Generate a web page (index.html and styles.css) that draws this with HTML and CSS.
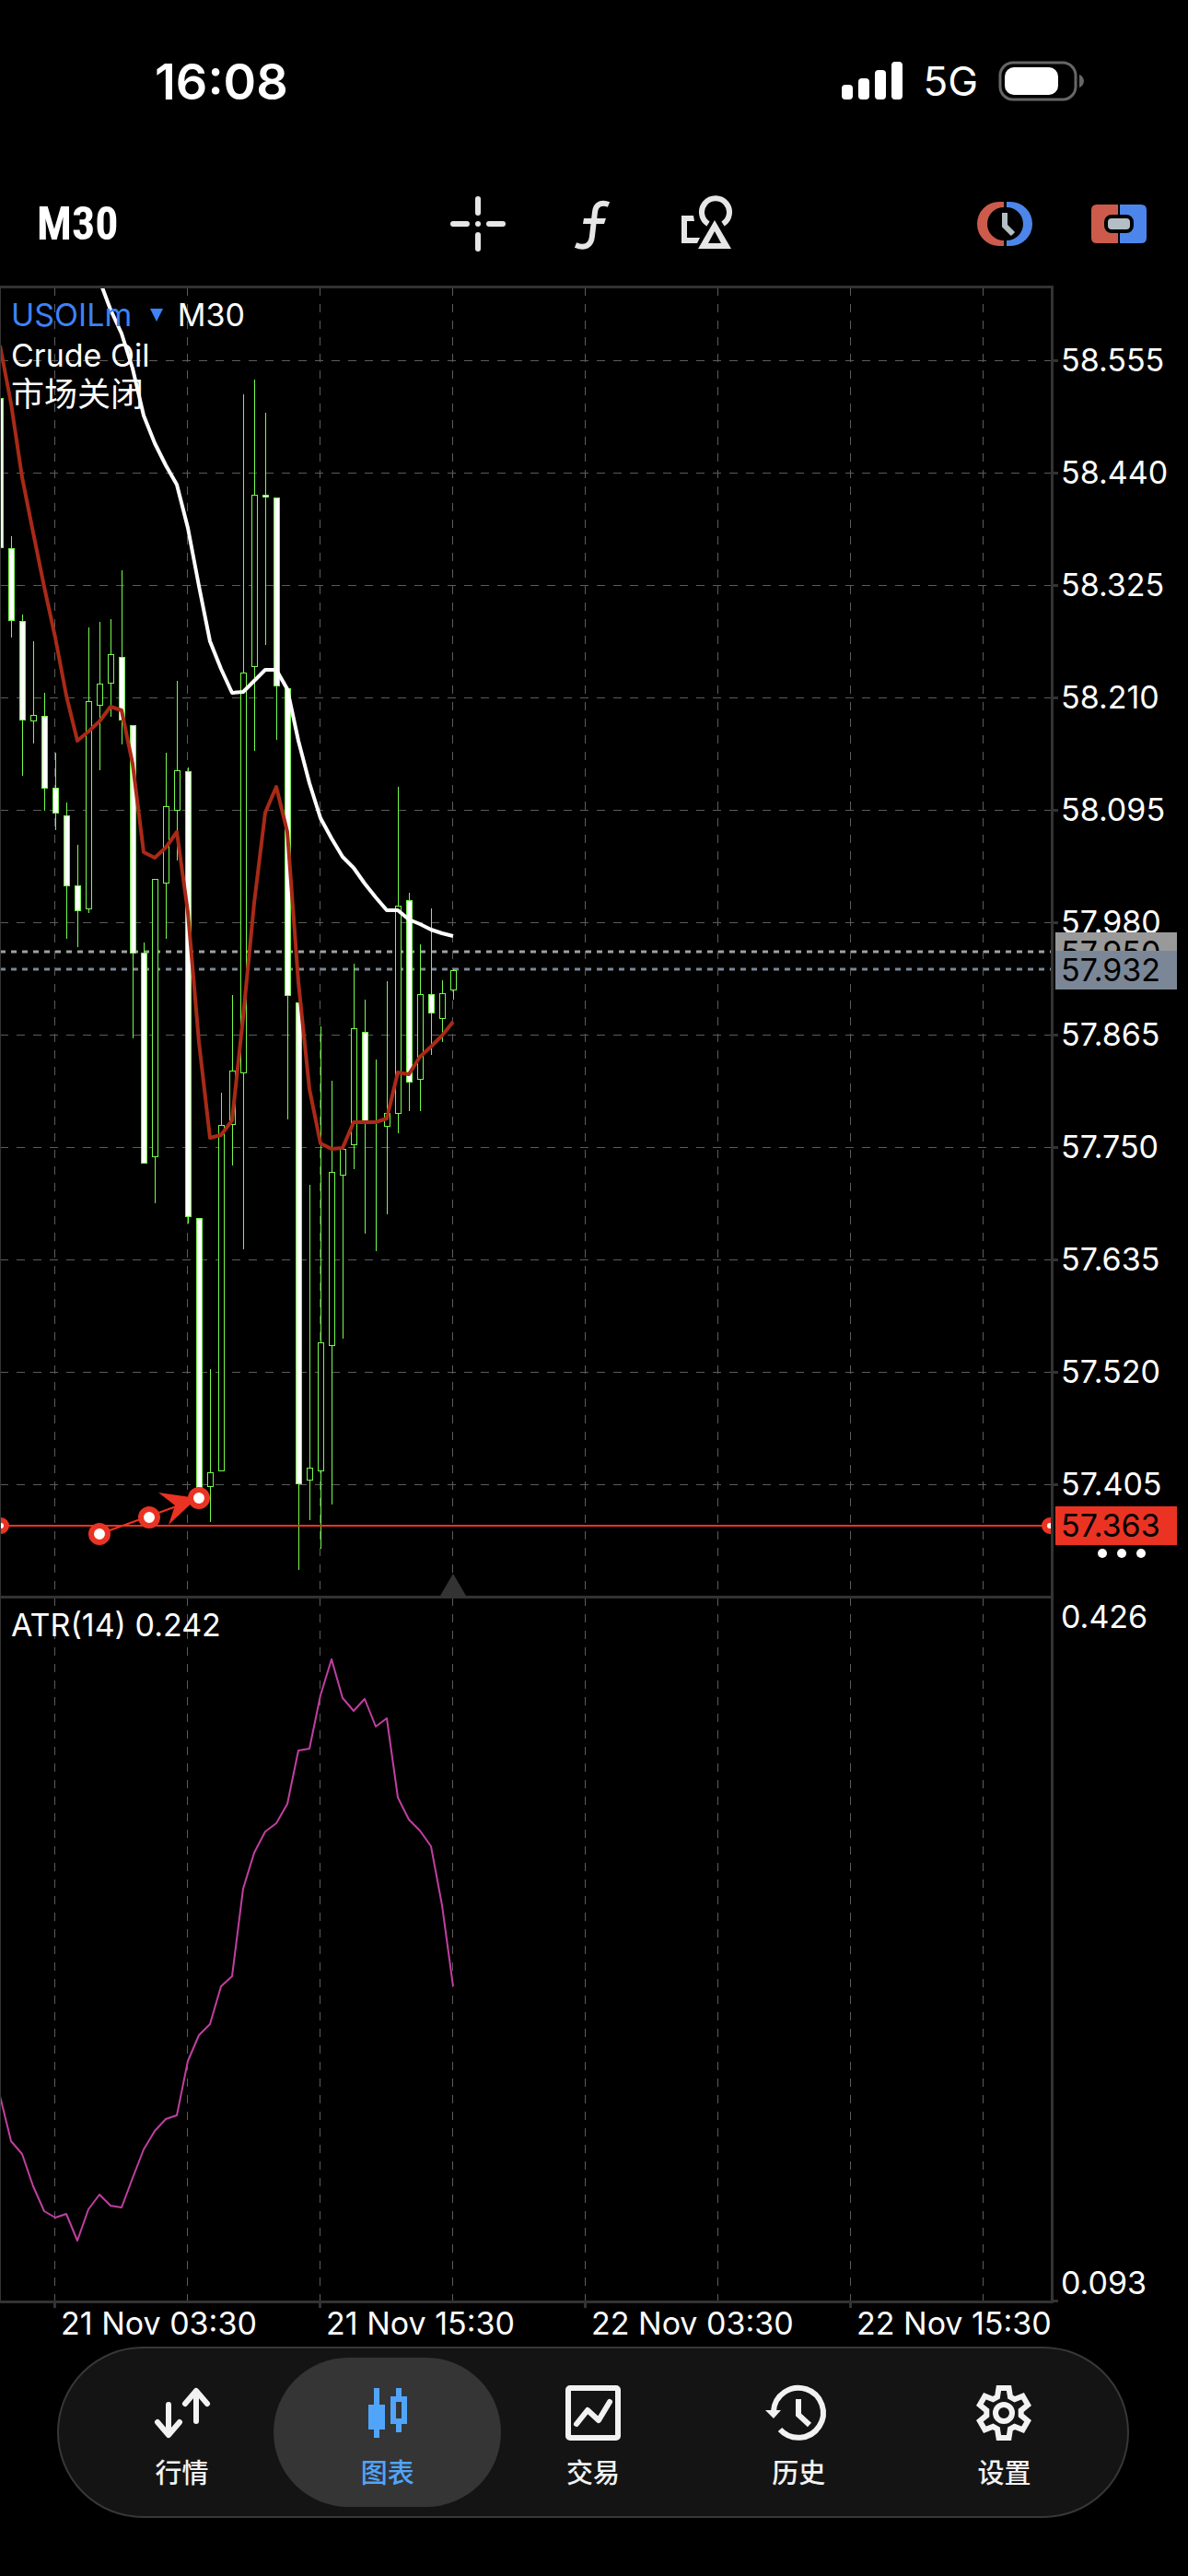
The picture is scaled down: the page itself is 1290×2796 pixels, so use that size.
FILE: index.html
```html
<!DOCTYPE html>
<html lang="zh-CN">
<head>
<meta charset="UTF-8">
<meta name="viewport" content="width=device-width, initial-scale=1.0">
<title>USOILm M30</title>
<link rel="stylesheet" href="styles.css">
</head>
<body>

<div class="status-bar">
    <span class="clock">16:08</span>
    <div class="status-icons">
        <svg class="signal" viewBox="0 0 66 42" width="66" height="42" fill="#fff">
            <rect x="0" y="25" width="12" height="16" rx="4"/>
            <rect x="18" y="18" width="12" height="23" rx="4"/>
            <rect x="36" y="9" width="12" height="32" rx="4"/>
            <rect x="54" y="0" width="12" height="41" rx="4"/>
        </svg>
        <span class="network">5G</span>
        <svg class="battery" viewBox="0 0 94 44" width="94" height="44">
            <rect x="2" y="2" width="82" height="40" rx="14" fill="none" stroke="#666" stroke-width="3"/>
            <rect x="7" y="7" width="58" height="30" rx="10" fill="#fff"/>
            <path d="M88 15c3 1 5 4 5 7s-2 6-5 7z" fill="#666"/>
        </svg>
    </div>
</div>

<div class="toolbar">
    <button class="timeframe" type="button">M30</button>
    <div class="tools">
        <button type="button" aria-label="Crosshair">
            <svg viewBox="0 0 60 60" width="60" height="60" stroke="#e6e6e6" stroke-width="6" stroke-linecap="round">
                <path d="M30 3v15M30 42v15M3 30h15M42 30h15M30 30h0"/>
            </svg>
        </button>
        <button type="button" aria-label="Indicators">
            <svg viewBox="0 0 60 60" width="60" height="60" fill="none" stroke="#e6e6e6" stroke-width="6">
                <path d="M48 9C41 6 34 8 33 17L30 43C29 54 22 57 12 53"/>
                <path d="M20 30L21 24H45L43 30z" fill="#e6e6e6" stroke="none"/>
            </svg>
        </button>
        <button type="button" aria-label="Objects">
            <svg viewBox="0 0 60 60" width="60" height="60" fill="none" stroke="#e6e6e6" stroke-width="6">
                <path d="M32 30A15 15 0 1 1 48 30"/>
                <path d="M16 21L17 27H9V45H23L20 51H3V21z" fill="#e6e6e6" stroke="none"/>
                <path fill-rule="evenodd" d="M39 26L57 57H21zM39 38L32 51H46z" fill="#e6e6e6" stroke="none"/>
            </svg>
        </button>
    </div>
    <div class="trade-tools">
        <button type="button" aria-label="Pending order">
            <svg viewBox="0 0 60 60" width="60" height="60">
                <path d="M29 6H24A24 24 0 0 0 24 54H29V48A18 18 0 0 1 29 12z" fill="#cc5b4b"/>
                <path d="M32 6H36A24 24 0 0 1 36 54H32V48A18 18 0 0 0 32 12z" fill="#4d86ea"/>
                <path d="M30 18V32L39 41" fill="none" stroke="#b3bec5" stroke-width="6"/>
            </svg>
        </button>
        <button type="button" aria-label="One click trading">
            <svg viewBox="0 0 60 60" width="60" height="60">
                <path d="M6 9H29V51H6Q0 51 0 45V15Q0 9 6 9z" fill="#cc5b4b"/>
                <path d="M31 9H54Q60 9 60 15V45Q60 51 54 51H31z" fill="#4d86ea"/>
                <rect x="16" y="22" width="28" height="16" rx="6" fill="#b3bec5" stroke="#000" stroke-width="4"/>
            </svg>
        </button>
    </div>
</div>

<div class="chart">
    <svg class="plot" viewBox="0 310 1290 2225">
        <defs>
            <clipPath id="plotArea"><rect x="1" y="313" width="1140" height="2184"/></clipPath>
        </defs>

        <g id="grid" class="grid"></g>

        <g class="frame">
            <rect x="0" y="310" width="1144" height="3"/>
            <rect x="0" y="310" width="1" height="2190"/>
            <rect x="0" y="1732" width="1144" height="3"/>
            <rect x="0" y="2497" width="1144" height="3"/>
            <rect x="1141" y="310" width="3" height="2190"/>
            <rect x="1144" y="2496" width="5" height="3"/>
        </g>
        <path class="shift-mark" d="M492 1708L506 1732H478z"/>

        <g clip-path="url(#plotArea)">
            <line class="ask-line" x1="0" y1="1033" x2="1141" y2="1033"/>
            <line class="bid-line" x1="0" y1="1052" x2="1141" y2="1052"/>
            <g id="candles" class="candles"></g>
            <polyline id="maFast" class="ma-fast"/>
            <polyline id="maSlow" class="ma-slow"/>
            <polyline id="atr" class="atr-line"/>

            <g class="drawing">
                <line x1="0" y1="1656" x2="1141" y2="1656"/>
                <line x1="108" y1="1665" x2="200" y2="1632"/>
                <path d="M172 1620L214 1626L183 1655L190 1634z"/>
                <circle cx="1" cy="1656" r="6"/>
                <circle cx="1140" cy="1656" r="6"/>
                <circle cx="108" cy="1665" r="9"/>
                <circle cx="162" cy="1647" r="9"/>
                <circle cx="216" cy="1626" r="9"/>
            </g>
        </g>

        <g id="prices" class="labels"></g>
        <g class="labels">
            <rect x="1146" y="1012" width="132" height="42" fill="#999"/>
            <text class="tag-text" x="1152" y="1046">57.950</text>
            <rect x="1146" y="1032" width="132" height="42" fill="#7b8796"/>
            <text class="tag-text" x="1152" y="1065">57.932</text>
            <rect x="1146" y="1635" width="132" height="42" fill="#eb3323"/>
            <text class="tag-text" x="1152" y="1668">57.363</text>
            <circle cx="1197" cy="1686" r="5"/>
            <circle cx="1218" cy="1686" r="5"/>
            <circle cx="1239" cy="1686" r="5"/>
            <text x="12" y="1776">ATR(14) 0.242</text>
            <text x="1152" y="1767">0.426</text>
            <text x="1152" y="2490">0.093</text>
            <text x="66" y="2534">21 Nov 03:30</text>
            <text x="354" y="2534">21 Nov 15:30</text>
            <text x="642" y="2534">22 Nov 03:30</text>
            <text x="930" y="2534">22 Nov 15:30</text>
        </g>
    </svg>

    <div class="legend">
        <div><button class="symbol" type="button">USOILm <svg viewBox="0 0 14 14" width="14" height="14"><path d="M0 0H14L7 14z" fill="#3d82f7"/></svg></button> <span>M30</span></div>
        <div>Crude Oil</div>
        <div class="market-state">市场关闭</div>
    </div>
</div>

<nav class="tab-bar">
    <a href="#quotes">
        <svg viewBox="0 0 60 60" width="60" height="60" fill="none" stroke="#f2f2f2" stroke-width="6" stroke-linecap="round" stroke-linejoin="round">
            <path d="M15 21V53M3 40L15 54L27 40M45 39V7M33 20L45 6L57 20"/>
        </svg>
        行情
    </a>
    <a href="#chart" class="active">
        <svg viewBox="0 0 60 60" width="60" height="60" fill="#50a5fa">
            <path d="M15 3h6v18h6v27h-6v9h-6v-9H9V21h6z"/>
            <path fill-rule="evenodd" d="M39 3h6v9h6v30h-6v9h-6v-9h-6V12h6zM39 18h6v18h-6z"/>
        </svg>
        图表
    </a>
    <a href="#trade">
        <svg viewBox="0 0 60 60" width="60" height="60" fill="none" stroke="#f2f2f2" stroke-width="6" stroke-linejoin="round" stroke-linecap="round">
            <rect x="3" y="3" width="54" height="54" rx="2"/>
            <path d="M12 42L24 27L36 38L48 18"/>
        </svg>
        交易
    </a>
    <a href="#history">
        <svg viewBox="0 0 60 60" width="60" height="60" fill="none" stroke="#f2f2f2" stroke-width="6">
            <path d="M3 28A27 27 0 1 1 10 48M30 15V32L42 43"/>
            <path d="M-6 27H11L3 36z" fill="#f2f2f2" stroke="none"/>
        </svg>
        历史
    </a>
    <a href="#settings">
        <svg viewBox="-30 -30 60 60" width="60" height="60" fill="none" stroke="#f2f2f2" stroke-width="6">
            <path d="M-5.5-27H5.5L7-17.5L11.7-14.8L20.6-18.3L26.1-8.7L18.7-2.7V2.7L26.1 8.7L20.6 18.3L11.7 14.8L7 17.5L5.5 27H-5.5L-7 17.5L-11.7 14.8L-20.6 18.3L-26.1 8.7L-18.7 2.7V-2.7L-26.1-8.7L-20.6-18.3L-11.7-14.8L-7-17.5z"/>
            <circle r="9"/>
        </svg>
        设置
    </a>
</nav>

<script src="script.js"></script>
</body>
</html>
```
FILE: styles.css
```css
* {
    box-sizing: border-box;
}
body {
    margin: 0;
    background-color: #000;
    color: #fff;
    font-family: Inter, "Noto Sans CJK SC", sans-serif;
}
button {
    padding: 0;
    border: none;
    background: none;
    color: inherit;
    font: inherit;
    cursor: pointer;
}
svg {
    display: block;
    overflow: visible;
}

/* status bar */
.status-bar {
    display: flex;
    justify-content: space-between;
    align-items: center;
    height: 176px;
    padding: 0 112px 0 168px;
}
.clock {
    font-size: 54px;
    font-weight: 600;
}
.status-icons {
    display: flex;
    align-items: center;
    gap: 22px;
}
.network {
    font-size: 44px;
    font-weight: 400;
}

/* toolbar */
.toolbar {
    display: grid;
    grid-template-columns: 1fr auto 1fr;
    align-items: center;
    height: 134px;
    padding: 0 45px 0 40px;
}
.timeframe {
    justify-self: start;
    font-family: "Roboto Condensed", "Liberation Sans", sans-serif;
    font-size: 50px;
    font-weight: 700;
}
.tools,
.trade-tools {
    display: flex;
    gap: 64px;
}
.trade-tools {
    justify-self: end;
}

/* chart */
.chart {
    position: relative;
}
.plot {
    width: 100%;
    height: auto;
}
.frame,
.shift-mark {
    fill: #333;
}
.frame,
.grid,
.candles {
    shape-rendering: crispEdges;
}
.grid line {
    stroke: #5c5c5c;
    stroke-dasharray: 9;
}
.grid rect {
    fill: #333;
}
.candles rect {
    fill: #000;
    stroke: #75fb4c;
}
.candles .down {
    fill: #fff;
}
.candles line {
    stroke: #75fb4c;
}
.ma-fast,
.ma-slow,
.atr-line {
    fill: none;
    stroke-linejoin: round;
    stroke-width: 4px;
}
.ma-fast {
    stroke: #a82a17;
}
.ma-slow {
    stroke: #fff;
}
.atr-line {
    stroke: #c03fa0;
    stroke-width: 2px;
}
.ask-line,
.bid-line {
    stroke: #a0a0a0;
    stroke-width: 3px;
    stroke-dasharray: 6;
}
.bid-line {
    stroke: #7b8796;
}
.drawing line {
    stroke: #eb3323;
    stroke-width: 2px;
}
.drawing path {
    fill: #eb3323;
}
.drawing circle {
    fill: #fff;
    stroke: #eb3323;
    stroke-width: 6px;
}
.labels {
    fill: #fff;
    font-size: 34px;
}
.tag-text {
    fill: #000;
}
.legend {
    position: absolute;
    top: 10px;
    left: 12px;
    font-size: 34px;
    line-height: 44px;
}
.market-state {
    font-size: 36px;
    line-height: 40px;
}
.symbol {
    display: inline-flex;
    align-items: center;
    gap: 20px;
    margin-right: 6px;
    color: #3d82f7;
}

/* bottom tabs */
.tab-bar {
    display: grid;
    grid-template-columns: repeat(5, 1fr);
    height: 186px;
    margin: 12px 64px 62px 62px;
    padding: 10px 22px;
    border: 2px solid #373737;
    border-radius: 94px;
    background-color: #141414;
}
.tab-bar a {
    display: flex;
    flex-direction: column;
    align-items: center;
    gap: 16px;
    margin: 0 -12px;
    padding-top: 30px;
    border-radius: 82px;
    color: #f2f2f2;
    font-size: 29px;
    font-weight: 500;
    line-height: 40px;
    text-decoration: none;
}
.tab-bar .active {
    background-color: #353535;
    color: #50a5fa;
}
```
FILE: script.js
```js
// one candle every 12px: [high, body top, body bottom, low, closed down]
var candles = [
    [432, 432, 594, 594, 1], [582, 595, 673, 692, 1], [667, 674, 781, 842, 1],
    [696, 776, 782, 807, 0], [752, 777, 855, 880, 1], [817, 855, 882, 901, 1],
    [871, 885, 961, 1019, 1], [917, 961, 988, 1028, 1], [681, 761, 986, 991, 0],
    [675, 742, 765, 836, 0], [672, 710, 741, 778, 0], [619, 713, 781, 808, 1],
    [787, 787, 1034, 1127, 1], [1023, 1034, 1262, 1262, 1], [954, 954, 1255, 1306, 0],
    [817, 875, 958, 1019, 0], [739, 836, 879, 934, 0], [833, 837, 1320, 1328, 1],
    [1322, 1322, 1614, 1614, 1], [1486, 1598, 1613, 1652, 0], [1186, 1221, 1596, 1596, 0],
    [1080, 1162, 1220, 1265, 0], [428, 730, 1164, 1356, 0], [412, 537, 723, 815, 0],
    [448, 537, 539, 700, 1], [540, 540, 744, 803, 1], [747, 747, 1080, 1215, 1],
    [1088, 1088, 1610, 1704, 1], [1286, 1593, 1606, 1650, 0], [1114, 1457, 1596, 1681, 0],
    [1173, 1272, 1460, 1633, 0], [1247, 1247, 1275, 1453, 0], [1046, 1116, 1242, 1269, 0],
    [1085, 1120, 1216, 1339, 1], [1150, 1217, 1218, 1358, 0], [1065, 1208, 1222, 1318, 0],
    [854, 983, 1208, 1230, 0], [969, 977, 1174, 1206, 1], [1025, 1079, 1171, 1206, 0],
    [986, 1079, 1099, 1145, 1], [1064, 1078, 1105, 1131, 0], [1052, 1053, 1074, 1085, 0]
];

var maFast = [375, 438, 518, 578, 637, 692, 755, 804, 794, 783, 767, 771, 829, 925, 931, 920, 903,
    990, 1131, 1235, 1232, 1216, 1104, 980, 882, 854, 903, 1066, 1182, 1241, 1247, 1246, 1218,
    1218, 1218, 1214, 1164, 1166, 1147, 1136, 1124, 1109];

var maSlow = [304, 336, 362, 400, 451, 481, 505, 526, 573, 636, 696, 726, 752, 751, 739, 727, 727,
    748, 804, 850, 888, 910, 930, 942, 959, 974, 988, 988, 998, 1003, 1009, 1013, 1016];

var atr = [2275, 2324, 2338, 2373, 2400, 2407, 2403, 2432, 2398, 2382, 2394, 2396, 2364, 2333,
    2313, 2300, 2296, 2237, 2209, 2197, 2156, 2145, 2050, 2011, 1988, 1979, 1958, 1900, 1898,
    1840, 1801, 1843, 1857, 1844, 1874, 1865, 1951, 1975, 1987, 2004, 2068, 2156];

var prices = ['58.555', '58.440', '58.325', '58.210', '58.095', '57.980', '57.865', '57.750',
    '57.635', '57.520', '57.405'];

function line(x1, y1, x2, y2) {
    return '<line x1="' + x1 + '" y1="' + y1 + '" x2="' + x2 + '" y2="' + y2 + '"/>';
}

function rect(x, y, w, h, cls) {
    return '<rect x="' + x + '" y="' + y + '" width="' + w + '" height="' + h + '" class="' + (cls || '') + '"/>';
}

// values end at the last candle, x = 492
function points(values) {
    var start = 492 - (values.length - 1) * 12;
    return values.map(function(y, i) {
        return (start + i * 12) + ',' + y;
    }).join(' ');
}

var grid = '';
var labels = '';
prices.forEach(function(price, i) {
    var y = 391 + i * 122;
    grid += line(0, y + 0.5, 1141, y + 0.5) + rect(1144, y - 1, 5, 3);
    labels += '<text x="1152" y="' + (y + 12) + '">' + price + '</text>';
});
for (var i = 0; i < 8; i++) {
    var x = 59 + i * 144;
    grid += line(x + 0.5, 312, x + 0.5, 1732) + line(x + 0.5, 1734, x + 0.5, 2497);
    if (i % 2 === 0) {
        grid += rect(x - 1, 2500, 3, 5);
    }
}
document.getElementById('grid').innerHTML = grid;
document.getElementById('prices').innerHTML = labels;

document.getElementById('candles').innerHTML = candles.map(function(c, i) {
    var x = i * 12;
    return line(x + 0.5, c[0], x + 0.5, c[3]) +
        rect(x - 2.5, c[1] + 0.5, 6, c[2] - c[1], c[4] ? 'down' : 'up');
}).join('');

document.getElementById('maFast').setAttribute('points', points(maFast));
document.getElementById('maSlow').setAttribute('points', points(maSlow));
document.getElementById('atr').setAttribute('points', points(atr));
```
